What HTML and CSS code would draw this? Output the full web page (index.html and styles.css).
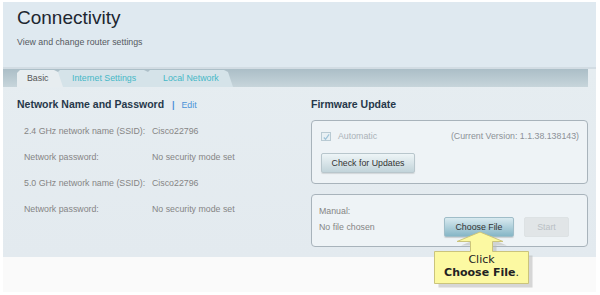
FILE: index.html
```html
<!DOCTYPE html>
<html lang="en">
<head>
    <meta charset="UTF-8">
    <title>Connectivity</title>
    <link rel="stylesheet" href="styles.css">
</head>
<body>
    <div class="page">
        <div class="header">
            <h1>Connectivity</h1>
            <p class="subtitle">View and change router settings</p>
        </div>

        <div class="panel">
            <!-- tabs -->
            <div class="tabs">
                <div class="tab tab-active">Basic</div>
                <div class="tab tab-2">Internet Settings</div>
                <div class="tab tab-3">Local Network</div>
            </div>

            <div class="content">
                <!-- network name -->
                <div class="col">
                    <div class="section-title">
                        Network Name and Password
                        <span class="sep">|</span>
                        <a href="#" class="edit-link">Edit</a>
                    </div>
                    <div class="info-row">
                        <span class="info-label">2.4 GHz network name (SSID):</span>
                        <span class="info-value">Cisco22796</span>
                    </div>
                    <div class="info-row">
                        <span class="info-label">Network password:</span>
                        <span class="info-value">No security mode set</span>
                    </div>
                    <div class="info-row">
                        <span class="info-label">5.0 GHz network name (SSID):</span>
                        <span class="info-value">Cisco22796</span>
                    </div>
                    <div class="info-row">
                        <span class="info-label">Network password:</span>
                        <span class="info-value">No security mode set</span>
                    </div>
                </div>

                <!-- firmware -->
                <div class="col">
                    <div class="section-title">Firmware Update</div>
                    <div class="fw-box">
                        <div class="auto-row">
                            <label class="auto-check">
                                <span class="checkbox">
                                    <svg width="9" height="9" viewBox="0 0 9 9">
                                        <path d="M2 4.5 L4 6.5 L8 1" fill="none" stroke="#9fc3d8" stroke-width="1.4"/>
                                    </svg>
                                </span>
                                Automatic
                            </label>
                            <span class="version">(Current Version: 1.1.38.138143)</span>
                        </div>
                        <button class="btn btn-check">Check for Updates</button>
                    </div>

                    <div class="fw-box fw-manual">
                        <div class="manual-info">
                            <div class="manual-label">Manual:</div>
                            <div>No file chosen</div>
                        </div>
                        <button class="btn btn-choose">Choose File</button>
                        <button class="btn btn-start" disabled>Start</button>
                    </div>
                </div>
            </div>
        </div>

        <!-- callout -->
        <div class="callout">
            <svg width="110" height="64" viewBox="0 0 110 64">
                <path d="M4.5,23.5 H40.5 V13.5 H27 L50,4 L73,13.5 H62.5 V23.5 H98.5 V55.5 H4.5 Z" fill="#b8b8b8" opacity="0.55" transform="translate(4,4)"/>
                <path d="M4.5,23.5 H40.5 V13.5 H27 L50,4 L73,13.5 H62.5 V23.5 H98.5 V55.5 H4.5 Z" fill="#fcf9a2" stroke="#cbc47c"/>
            </svg>
            <div class="callout-text">
                Click<br>
                <b>Choose File</b>.
            </div>
        </div>
    </div>
</body>
</html>
```

FILE: styles.css
```css
* {
    margin: 0;
    padding: 0;
    box-sizing: border-box;
}

body {
    font-family: "Liberation Sans", Arial, sans-serif;
    background: #ffffff;
    color: #858585;
    font-size: 8.8px;
}

.page {
    position: relative;
    margin: 2px 4px 0 3px;
    height: 290px;
    background: #fafafa;
}

.header {
    height: 67px;
    background: #dfe9f0;
    border-bottom: 2px solid #d2dce3;
    padding: 5px 14px 0;
}

.header h1 {
    font-size: 19px;
    font-weight: normal;
    line-height: 22px;
    color: #1d2630;
}

.subtitle {
    margin-top: 7px;
    line-height: 12px;
    color: #555a60;
}

.panel {
    height: 188px;
    background: linear-gradient(#e6edf1, #e3eaef);
}

.tabs {
    display: flex;
    align-items: flex-end;
    height: 18px;
    margin-right: 8px;
    padding-left: 14px;
    background: linear-gradient(#abbec7, #c7d5db);
}

.tab {
    position: relative;
    height: 17px;
    line-height: 17px;
    background: #d5e3e9;
    color: #45b8c7;
    clip-path: polygon(0 3px, 3px 0, calc(100% - 9px) 0, calc(100% - 5px) 2px, 100% 100%, 0 100%);
}

.tab-active {
    width: 46px;
    padding-left: 10px;
    background: #e7edf0;
    color: #555;
    z-index: 3;
}

.tab-2 {
    width: 96px;
    margin-left: -6px;
    padding-left: 15px;
    z-index: 2;
}

.tab-3 {
    width: 86px;
    margin-left: -6px;
    padding-left: 16px;
    z-index: 1;
}

.content {
    display: grid;
    grid-template-columns: 294px 277px;
    padding-left: 14px;
}

.section-title {
    margin-top: 10px;
    height: 14px;
    line-height: 14px;
    font-size: 10.5px;
    font-weight: bold;
    color: #26384a;
}

.sep {
    margin: 0 4px 0 5px;
    color: #4a90d9;
    font-size: 9px;
}

.edit-link {
    color: #4a93d8;
    text-decoration: none;
    font-weight: normal;
    font-size: 8.8px;
}

.info-row {
    display: flex;
    height: 26px;
    line-height: 26px;
    padding-left: 7px;
}

.section-title + .info-row {
    margin-top: 7px;
}

.info-label {
    width: 128px;
}

.fw-box {
    margin-top: 9px;
    border: 1px solid #a8b3bb;
    border-radius: 4px;
    background: #eef3f6;
    padding: 10px 8px 10px 9px;
}

.auto-row {
    display: flex;
    justify-content: space-between;
    height: 11px;
    line-height: 11px;
}

.auto-check {
    display: flex;
    align-items: center;
    gap: 7px;
    color: #aab2b8;
}

.checkbox {
    display: flex;
    width: 10px;
    height: 9px;
    border: 1px solid #b9cad3;
    background: #e8f0f4;
}

.version {
    color: #8c9196;
}

.btn {
    height: 20px;
    font-family: "Liberation Sans", Arial, sans-serif;
    font-size: 8.8px;
    color: #333;
    border: 1px solid #b8c6cc;
    border-radius: 2px;
}

.btn-check {
    margin-top: 11px;
    width: 94px;
    background: linear-gradient(#eef5f7, #c2d4da);
    box-shadow: 0 1px 1px rgba(0, 0, 0, 0.12);
}

.fw-manual {
    display: flex;
    align-items: flex-start;
    margin-top: 10px;
    padding: 8px 8px 9px 7px;
}

.manual-info {
    width: 125px;
    line-height: 16px;
}

.btn-choose {
    margin-top: 14px;
    width: 70px;
    background: linear-gradient(#d9eaf0, #86b6c6);
    border-color: #9fbdc8;
    box-shadow: 0 1px 1px rgba(0, 0, 0, 0.15);
}

.btn-start {
    margin-top: 14px;
    margin-left: 10px;
    width: 45px;
    background: #e1e5e7;
    border-color: #dde2e4;
    color: #b9c0c5;
}

/* callout over the panel */
.callout {
    position: absolute;
    left: 427px;
    top: 226px;
    width: 110px;
    height: 64px;
}

.callout svg {
    display: block;
}

.callout-text {
    position: absolute;
    left: 4px;
    top: 25px;
    width: 95px;
    text-align: center;
    font-family: "DejaVu Sans", Verdana, sans-serif;
    font-size: 11px;
    line-height: 13px;
    color: #222;
}
```
